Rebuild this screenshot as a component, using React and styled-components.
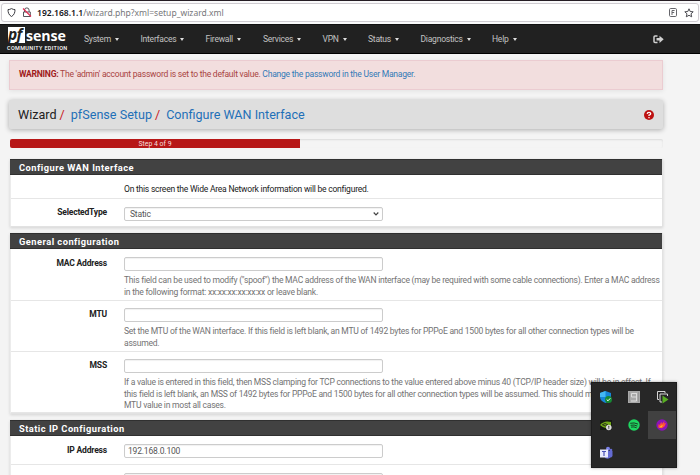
import React from 'react';
import styled, { createGlobalStyle } from 'styled-components';

const Global = createGlobalStyle`
  * { box-sizing: border-box; }
  html, body { margin: 0; height: 475px; overflow: hidden; }
  body { background: #f4f4f4; font-family: Roboto, sans-serif; font-size: 8.56px; letter-spacing: -0.242px; color: #212121; }
`;

const Page = styled.div`
  height: 475px;
  overflow: hidden;
  position: relative;
`;

const AddressBar = styled.div`
  height: 24px;
  padding: 2px 1px 2px;
  border-top: 1px solid #251d24;
  background: #f9f9fa;
`;

const AddressField = styled.div`
  height: 19px;
  border: 1px solid #cfccd1;
  border-radius: 3px;
  background: #fff;
  display: flex;
  align-items: center;
  padding: 0 4px 0 5px;
`;

const LockIcon = styled.svg`
  margin-left: 6px;
`;

const StarIcon = styled.svg`
  margin-left: 7px;
`;

const Url = styled.div`
  flex: 1;
  margin-left: 5px;
  font: 8.56px/16px "Noto Sans", sans-serif;
  letter-spacing: 0;
  color: #77777b;
  white-space: nowrap;
  b { color: #15141a; font-weight: 600; }
`;

const Nav = styled.nav`
  height: 30px;
  background: #212121;
  border-top: 1px solid #111;
  border-bottom: 1px solid #000;
  display: flex;
  align-items: center;
  padding-left: 7px;
`;

const Logo = styled.div`
  width: 77px;
  height: 26px;
  padding-top: 1px;
`;

const LogoTop = styled.div`
  display: flex;
  height: 18px;
  color: #fff;
`;

const LogoMark = styled.span`
  width: 17px;
  height: 16px;
  margin: 0 1px;
  background: #fff;
  color: #212121;
  font: italic 700 15.5px/15px "Open Sans", sans-serif;
  letter-spacing: -0.8px;
`;

const LogoWord = styled.span`
  font: 700 14.2px/17px "Open Sans", sans-serif;
  letter-spacing: -0.05px;
`;

const Edition = styled.div`
  font: 500 5.5px/6px Roboto, sans-serif;
  letter-spacing: 0.33px;
  color: #fff;
  white-space: nowrap;
`;

const Item = styled.div`
  width: ${p => p.$w}px;
  display: flex;
  align-items: center;
  gap: 4px;
  color: #c2c2c2;
  line-height: 12px;
  &::after {
    content: "";
    margin-top: 1px;
    border: 2px solid transparent;
    border-top: 3px solid #ddd;
    border-bottom: 0;
  }
`;

const Content = styled.main`
  width: 654px;
  margin: 6px 0 0 9px;
`;

const Alert = styled.div`
  height: 30px;
  padding: 0 9px;
  background: #f2dede;
  border: 1px solid #ebccd1;
  box-shadow: 0 1px 5px rgba(0, 0, 0, 0.08);
  line-height: 27px;
  color: #a94442;
  white-space: nowrap;
  b { color: #a01c1c; }
  a { color: #337ab7; }
`;

const Crumbs = styled.header`
  height: 29px;
  margin-top: 10px;
  padding: 0 9px;
  border-radius: 2px;
  background: #dedede;
  box-shadow: 0 1px 5px rgba(0, 0, 0, 0.3);
  display: flex;
  align-items: center;
  font-size: 12.6px;
  letter-spacing: 0;
  a { color: #1e70b8; }
  i { color: #c9181e; font-style: normal; margin: 0 6px 0 3px; }
  svg { margin-left: auto; }
`;

const Progress = styled.div`
  height: 9px;
  margin: 10px 0 11px 1px;
  border-radius: 2px;
  box-shadow: inset 0 1px 2px rgba(0, 0, 0, 0.1);
  overflow: hidden;
`;

const Bar = styled.div`
  width: 290px;
  height: 9px;
  background: #b71717;
  color: #f5dede;
  text-align: center;
  font-size: 6.9px;
  letter-spacing: 0;
  line-height: 10px;
`;

const Panel = styled.section`
  height: ${p => p.$h}px;
  width: 653px;
  margin: 0 0 6px 1px;
  background: #fff;
  border: 1px solid #e2e2e2;
  border-top: 0;
  border-left-color: #ececec;
  box-shadow: 0 1px 3px rgba(0, 0, 0, 0.14);
`;

const Heading = styled.h2`
  height: 16px;
  margin: 0 0 0 -1px;
  padding-left: 9px;
  background: #424242;
  border-top: 1px solid #303030;
  border-bottom: 1px solid #303030;
  color: #fff;
  font-size: 9.3px;
  font-weight: 700;
  line-height: 15px;
  letter-spacing: 0.47px;
`;

const Row = styled.div`
  height: ${p => p.$h}px;
  padding-top: ${p => p.$top ?? 8}px;
  border-bottom: ${p => (p.$last ? 0 : 1)}px solid #e6e6e6;
  display: flex;
`;

const Label = styled.label`
  flex: 0 0 96px;
  margin-right: 17px;
  text-align: right;
  font-weight: 700;
  letter-spacing: -0.2px;
  line-height: 12px;
`;

const Field = styled.div`
  width: 259px;
  height: 14px;
  border: 1px solid #ccc;
  border-radius: 2px;
  background: #fff;
  box-shadow: inset 0 1px 1px rgba(0, 0, 0, 0.06);
  color: #555;
  padding: 0 3px 0 ${p => (p.$select ? 5 : 3)}px;
  margin-top: ${p => (p.$select ? 1 : 0)}px;
  letter-spacing: -0.2px;
  display: flex;
  align-items: center;
  justify-content: space-between;
  line-height: 12px;
`;

const Help = styled.div`
  margin-top: 4px;
  color: #737373;
  line-height: 11.5px;
  white-space: nowrap;
`;

const Tray = styled.div`
  position: absolute;
  left: 591px;
  top: 382px;
  width: 86px;
  height: 86px;
  background: #272727;
  border: 1px solid #1d1d1d;
  box-shadow: 0 0 3px rgba(0, 0, 0, 0.35);
  display: grid;
  grid-template-columns: 27px 29px 28px;
  grid-template-rows: repeat(3, 28px);
`;

const Cell = styled.div`
  display: grid;
  place-items: center;
  background: ${p => (p.$active ? '#414141' : 'transparent')};
`;

const Icon = ({ size = 14, box = 14, children }) => (
  <svg width={size} height={size} viewBox={`0 0 ${box} ${box}`} fill="none">{children}</svg>
);

const menu = [['System', 56.5], ['Interfaces', 65], ['Firewall', 57.5], ['Services', 59.5],
  ['VPN', 45.5], ['Status', 52.5], ['Diagnostics', 71.5], ['Help', 160.5]];

const Setting = ({ label, h, help, value, top }) => (
  <Row $h={h} $top={top}>
    <Label>{label}</Label>
    <div>
      <Field>{value}</Field>
      {help && <Help>{help.map(line => <div key={line}>{line}</div>)}</Help>}
    </div>
  </Row>
);

export default function App() {
  return (
    <Page>
      <Global />
      <AddressBar>
        <AddressField>
          <Icon size={9} box={9}><path d="M4.5.6C5.6 1.3 6.9 1.6 8 1.6c0 3-.8 5.400-3.500 6.900C1.800 7 1 4.600 1 1.600c1.100 0 2.400-.3 3.500-1Z" stroke="#3c3c42" /></Icon>
          <LockIcon width="10" height="11" viewBox="0 0 10 11" fill="none">
            <path d="M2.500 5V3.200a2.300 2.300 0 0 1 4.600 0V5M1.500 5h6.800v4.500H1.500z" stroke="#55555b" />
            <path d="m1 1.500 8 8" stroke="#e22850" strokeWidth="1.100" />
          </LockIcon>
          <Url><b>192.168.1.1</b>/wizard.php?xml=setup_wizard.xml</Url>
          <svg width="8" height="9" viewBox="0 0 8 9" fill="none">
            <rect x=".5" y=".5" width="7" height="8" rx="1.200" stroke="#66666b" />
            <path d="M3 7V2.500h2.600M3 4.500h2.200" stroke="#66666b" />
          </svg>
          <StarIcon width="10" height="10" viewBox="0 0 10 10" fill="none">
            <path d="m5 .8 1.200 2.700 3 .3L7 5.800l.7 3L5 7.300 2.300 8.800l.7-3L.8 3.800l3-.3Z" stroke="#4a4a50" strokeLinejoin="round" />
          </StarIcon>
        </AddressField>
      </AddressBar>
      <Nav>
        <Logo>
          <LogoTop><LogoMark>pf</LogoMark><LogoWord>sense</LogoWord></LogoTop>
          <Edition>COMMUNITY EDITION</Edition>
        </Logo>
        {menu.map(([name, w]) => <Item key={name} $w={w}>{name}</Item>)}
        <svg width="11" height="9" viewBox="0 0 11 9">
          <path d="M4.500 1H2Q1 1 1 2v4.500q0 1 1 1h2.500" fill="none" stroke="#d0d0d0" strokeWidth="1.500" />
          <path d="M3.500 3h3V.7l4.200 3.600-4.200 3.600V5.600h-3z" fill="#d0d0d0" />
        </svg>
      </Nav>
      <Content>
        <Alert><b>WARNING:</b> The 'admin' account password is set to the default value. <a>Change the password in the User Manager.</a></Alert>
        <Crumbs>
          Wizard<i>/</i><a>pfSense Setup</a><i>/</i><a>Configure WAN Interface</a>
          <svg width="10" height="10" viewBox="0 0 10 10" fill="none">
            <circle cx="5" cy="5" r="5" fill="#bd1111" />
            <path d="M3.200 3.900Q3.300 2.300 5 2.300T6.700 3.700Q6.700 4.600 5 5.200v.9M5 7v1.300" stroke="#fff" strokeWidth="1.300" />
          </svg>
        </Crumbs>
        <Progress><Bar>Step 4 of 9</Bar></Progress>
        <Panel $h={68}>
          <Heading>Configure WAN Interface</Heading>
          <Row $h={24} $top={9}><Label /><div>On this screen the Wide Area Network information will be configured.</div></Row>
          <Row $h={27} $top={7} $last>
            <Label>SelectedType</Label>
            <Field $select>Static<svg width="6" height="4" viewBox="0 0 6 4"><path d="m.7.500 2.300 2.300L5.300.500" fill="none" stroke="#444" strokeWidth="1.200" /></svg></Field>
          </Row>
        </Panel>
        <Panel $h={181}>
          <Heading>General configuration</Heading>
          <Setting label="MAC Address" h={52} help={['This field can be used to modify ("spoof") the MAC address of the WAN interface (may be required with some cable connections). Enter a MAC address', 'in the following format: xx:xx:xx:xx:xx:xx or leave blank.']} />
          <Setting label="MTU" h={51} top={7} help={['Set the MTU of the WAN interface. If this field is left blank, an MTU of 1492 bytes for PPPoE and 1500 bytes for all other connection types will be', 'assumed.']} />
          <Setting label="MSS" h={61} top={7} help={['If a value is entered in this field, then MSS clamping for TCP connections to the value entered above minus 40 (TCP/IP header size) will be in effect. If', 'this field is left blank, an MSS of 1492 bytes for PPPoE and 1500 bytes for all other connection types will be assumed. This should match the above', 'MTU value in most all cases.']} />
        </Panel>
        <Panel $h={90}>
          <Heading>Static IP Configuration</Heading>
          <Setting label="IP Address" h={29} value="192.168.0.100" />
          <Setting label="Subnet Mask" h={29} />
        </Panel>
      </Content>
      <Tray>
        <Cell><Icon>
          <path d="M6.500 1 12 3v4c0 3-2.500 5-5.500 6C3.500 12 1 10 1 7V3Z" fill="#1684d8" />
          <path d="M6.500 1 1 3v4h5.500z" fill="#43b8f4" />
          <circle cx="9.500" cy="9.500" r="3.500" fill="#168a34" /><path d="m7.700 9.500 1.300 1.300 2.300-2.500" stroke="#fff" />
        </Icon></Cell>
        <Cell><Icon>
          <path d="M1 1h12v12H1z" fill="#a9a9a9" /><path d="M10 3.500H4.500v3.500H9.500v4H4M9.500 3.500v4" stroke="#dcdcdc" /><path d="M2.500 2v10M11.500 2v10" stroke="#8c8c8c" strokeWidth=".6" />
        </Icon></Cell>
        <Cell><Icon>
          <path d="M4 9.500H2.500v-8h7.500V3" stroke="#d5d5d5" /><path d="M7 12H5V4h7.500v2" stroke="#d5d5d5" /><path d="m7.500 5.500 6 4-6 4z" fill="#58ae22" />
        </Icon></Cell>
        <Cell><Icon>
          <path d="M1 2h12v10H1z" fill="#151b12" /><path d="M1 7q4-5 11-3v5Q6 12 1 7Z" fill="#72a918" /><path d="M3 7q3-3 6 0-3 2-5 0" stroke="#263314" /><circle cx="9.800" cy="9.500" r="2.800" fill="#ddd" /><path d="M9.800 7.800v2M9.800 10.300v.8" stroke="#333" />
        </Icon></Cell>
        <Cell><Icon size={12} box={12}>
          <circle cx="6" cy="6" r="5.700" fill="#1ed760" /><path d="M2.600 4.200q3.700-1 7 .7M3 6.200q3.300-.8 6 .7M3.400 8q2.700-.6 4.900.6" stroke="#173d23" strokeLinecap="round" />
        </Icon></Cell>
        <Cell $active><Icon size={12} box={12}>
          <circle cx="6" cy="6" r="5.700" fill="#8d12b8" /><path d="M2.200 8.500 2.600 5l1.300 1L5.200 2.800 6 5l2.300-3-.1 2.500L10 4 8.700 7.200 6 9.300z" fill="#ff5238" /><path d="M3 8.500 5.500 6.500l1.500-.5-1.500 2.200z" fill="#ffbd2b" />
        </Icon></Cell>
        <Cell><Icon>
          <circle cx="9" cy="2.800" r="2" fill="#7b83eb" /><circle cx="12" cy="4" r="1.300" fill="#666bd0" /><path d="M7 5h6.500v5q-1 1.500-2 1.500Q9.500 13.500 6 12z" fill="#646bd2" /><path d="M1 3.500h8v8H1z" fill="#e8e9fb" /><path d="M3 5.500h4M5 5.500v4.500" stroke="#4850b5" strokeWidth="1.200" />
        </Icon></Cell>
      </Tray>
    </Page>
  );
}
